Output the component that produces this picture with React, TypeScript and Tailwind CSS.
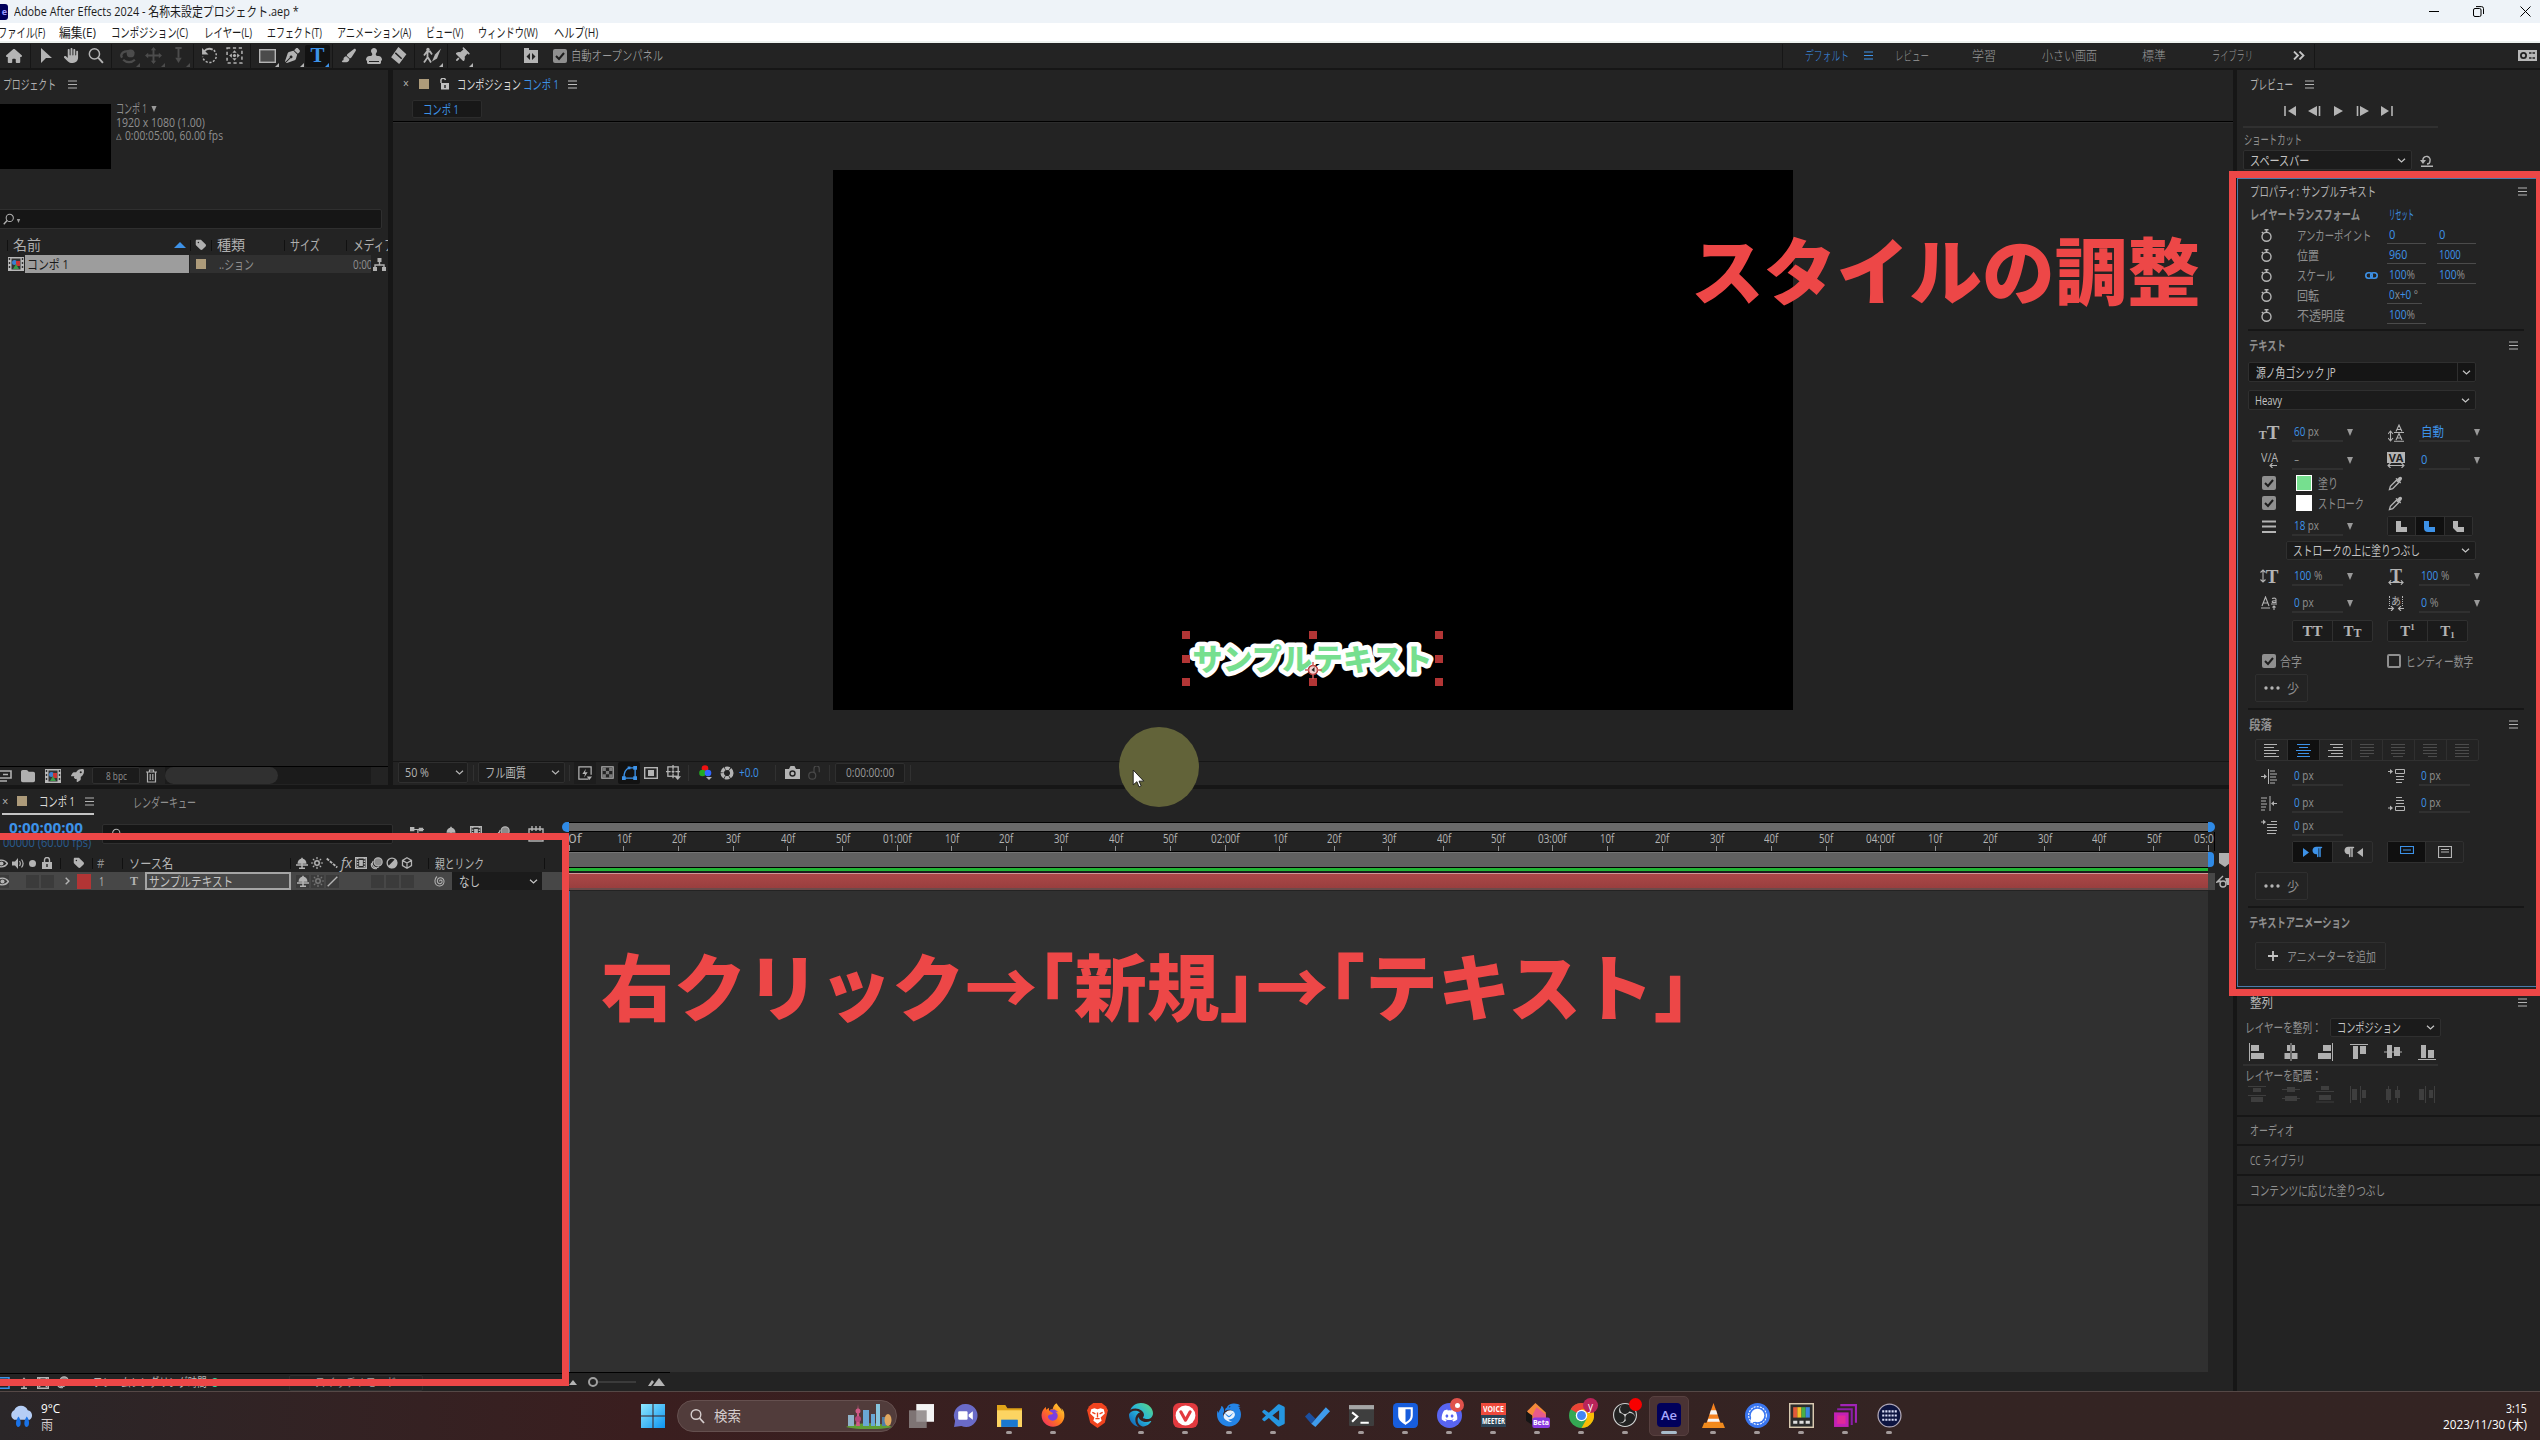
import React, { useLayoutEffect, useRef } from "react";
import { FaHand, FaStamp, FaThumbtack, FaPaintbrush, FaPenNib, FaHouse, FaFirefoxBrowser, FaEdge, FaDiscord, FaTag, FaFolder, FaRocket, FaParagraph } from "react-icons/fa6";
import { SiThunderbird, SiObsstudio } from "react-icons/si";
import { BiLogoVisualStudio } from "react-icons/bi";

/* Text squeezed or stretched to the width given by its class. */
function T({ c = "", children }: { c?: string; children: React.ReactNode }) {
  const o = useRef<HTMLSpanElement>(null);
  const i = useRef<HTMLSpanElement>(null);
  useLayoutEffect(() => {
    if (o.current && i.current) {
      const n = i.current.offsetWidth;
      if (n > 0) i.current.style.transform = `scaleX(${o.current.offsetWidth / n})`;
    }
  }, []);
  return (
    <span ref={o} className={`block shrink-0 whitespace-nowrap ${c}`}>
      <span ref={i} className="inline-block origin-left align-top">{children}</span>
    </span>
  );
}

function Svg({ c = "size-4", vb = "0 0 16 16", children }: { c?: string; vb?: string; children: React.ReactNode }) {
  return (
    <svg viewBox={vb} className={`shrink-0 ${c}`} fill="none" stroke="currentColor" strokeWidth="1.4">
      {children}
    </svg>
  );
}

const Menu = ({ c = "" }: { c?: string }) => (
  <Svg c={`h-[9px] w-[9px] ${c}`} vb="0 0 9 9"><path d="M0 1h9M0 4.500h9M0 8h9" strokeWidth="1" /></Svg>
);
const Chev = ({ c = "" }: { c?: string }) => (
  <Svg c={`h-[5px] w-[9px] ${c}`} vb="0 0 9 5"><path d="M1 .7l3.500 3.300L8 .7" strokeWidth="1.200" /></Svg>
);
const Tri = ({ c = "h-[7px] w-[6px]" }: { c?: string }) => (
  <Svg c={`text-[#9a9a9a] ${c}`} vb="0 0 6 7"><path d="M0 0h6L3 7z" fill="currentColor" stroke="none" /></Svg>
);
const Sep = ({ c = "" }: { c?: string }) => <span className={`h-[24px] w-px shrink-0 bg-[#161616] ${c}`} />;
const Slot = ({ w = "w-[25px]", c = "", children }: { w?: string; c?: string; children?: React.ReactNode }) => (
  <span className={`relative flex h-[22px] shrink-0 items-center justify-center ${w} ${c}`}>{children}</span>
);
const Corner = () => (
  <Svg c="absolute right-[1px] bottom-0 size-[4px]" vb="0 0 4 4"><path d="M4 0v4H0z" fill="currentColor" stroke="none" /></Svg>
);
const Check = ({ c = "" }: { c?: string }) => (
  <Svg c={`size-[14px] ${c}`} vb="0 0 14 14">
    <rect width="14" height="14" rx="2" fill="#8f8f8f" stroke="none" />
    <path d="M3 7l3 3 5-6" stroke="#1d1d1d" strokeWidth="2" />
  </Svg>
);
const Loupe = ({ c = "" }: { c?: string }) => (
  <Svg c={c}><circle cx="7" cy="6.500" r="4.800" /><path d="M10.500 10l4.500 5" strokeWidth="1.800" /></Svg>
);
const CompIcon = ({ c = "" }: { c?: string }) => (
  <Svg c={`h-[14px] w-[16px] ${c}`} vb="0 0 16 14">
    <rect width="16" height="14" fill="#b8b8b8" stroke="none" />
    <path d="M1.500 1v12M14.500 1v12" stroke="#333" strokeDasharray="2 2" />
    <rect x="3.500" y="1.500" width="9" height="11" fill="#333" stroke="none" />
    <circle cx="6.500" cy="5.500" r="2.500" fill="#3a7fd0" stroke="none" />
    <rect x="8" y="4" width="4" height="5" fill="#c33" stroke="none" />
    <path d="M5 12l3-5 3 5z" fill="#3a9b48" stroke="none" />
  </Svg>
);
const HS = ({ c }: { c: string }) => <span className={`h-[11px] w-px shrink-0 bg-[#111] ${c}`} />;

function MenuBar() {
  return (
    <>
      <div className="flex h-[23px] items-center bg-[#eef3f8] text-[13px] text-[#1b1b1b]">
        <span className="flex h-[16px] w-[8px] items-center justify-end overflow-hidden rounded-r-[3px] bg-[#00005b] pr-[1px] text-[9px] font-bold text-[#9999ff]">e</span>
        <T c="ml-[6px] w-[285px]">Adobe After Effects 2024 - 名称未設定プロジェクト.aep *</T>
        <div className="ml-auto flex items-center pr-[9px] text-black">
          <Svg c="h-[12px] w-[10px]" vb="0 0 10 12"><path d="M0 5.500h10" strokeWidth="1" /></Svg>
          <Svg c="ml-[34px] size-[11px]" vb="0 0 11 11"><rect x=".5" y="2.500" width="7.500" height="8" rx="1.500" strokeWidth="1" /><path d="M3 .6h5.500a2 2 0 012 2V8" strokeWidth="1" /></Svg>
          <Svg c="ml-[36px] size-[11px]" vb="0 0 11 11"><path d="M.5.5l10 10M10.500.5l-10 10" strokeWidth="1" /></Svg>
        </div>
      </div>
      <div className="flex h-[20px] items-center border-b-2 border-[#edf2ef] bg-white text-[13px] text-[#1b1b1b]">
        <T c="-ml-[2px] w-[47px]">ファイル(F)</T>
        <T c="ml-[14px] w-[37px]">編集(E)</T>
        <T c="ml-[15px] w-[77px]">コンポジション(C)</T>
        <T c="ml-[16px] w-[48px]">レイヤー(L)</T>
        <T c="ml-[15px] w-[55px]">エフェクト(T)</T>
        <T c="ml-[15px] w-[74px]">アニメーション(A)</T>
        <T c="ml-[15px] w-[37px]">ビュー(V)</T>
        <T c="ml-[15px] w-[60px]">ウィンドウ(W)</T>
        <T c="ml-[16px] w-[44px]">ヘルプ(H)</T>
      </div>
    </>
  );
}

function Toolbar() {
  return (
    <div className="flex h-[25px] items-center bg-[#232323] text-[13px] text-[#b4b4b4]">
      <Slot w="w-[28px]"><FaHouse className="size-[16px]" /></Slot>
      <Sep c="ml-[2px]" />
      <Slot c="ml-[3px]"><Svg c="h-[16px] w-[13px]" vb="0 0 13 16"><path d="M1 0l11 10H6l-5 5z" fill="currentColor" stroke="none" /></Svg></Slot>
      <Slot w="w-[24px]"><FaHand className="size-[15px]" /></Slot>
      <Slot><Loupe c="size-[17px]" /></Slot>
      <Sep c="ml-[3px]" />
      <div className="ml-[4px] flex text-[#4c4c4c]">
        <Slot><Svg c="size-[17px]"><path d="M2 10a6 4 0 1111-4" strokeWidth="2.200" /><circle cx="10" cy="6" r="3" fill="currentColor" /><path d="M3 12c3 3 8 3 11 0" strokeWidth="2" /></Svg><Corner /></Slot>
        <Slot><Svg c="size-[17px]"><path d="M8 2v12M2 8h12" strokeWidth="1.800" /><path d="M8 0l2.500 3h-5zM8 16l2.500-3h-5zM0 8l3-2.500v5zM16 8l-3-2.500v5z" fill="currentColor" stroke="none" /></Svg><Corner /></Slot>
        <Slot><Svg c="size-[17px]"><path d="M8 1v9M5 1h6" strokeWidth="1.800" /><path d="M8 15l3-5H5z" fill="currentColor" stroke="none" /></Svg><Corner /></Slot>
      </div>
      <Sep c="ml-[2px]" />
      <Slot c="ml-[3px]"><Svg c="size-[17px]"><path d="M3 4a6.500 6.500 0 018-1.500" strokeWidth="1.800" /><path d="M12 3a6.500 6.500 0 11-10.500 6" strokeDasharray="2 1.500" /><path d="M1 1v6h6z" fill="currentColor" stroke="none" /></Svg></Slot>
      <Slot><Svg c="size-[17px]"><rect x="1" y="1" width="14" height="14" strokeDasharray="3 2.500" /><path d="M8 3l2 2.500H6zM8 13l2-2.500H6zM3 8l2.500-2v4zM13 8l-2.500-2v4z" fill="currentColor" stroke="none" /><circle cx="8" cy="8" r="1.500" fill="currentColor" stroke="none" /></Svg></Slot>
      <Sep c="ml-[3px]" />
      <Slot c="ml-[4px]"><Svg c="h-[14px] w-[17px]" vb="0 0 17 14"><rect x=".7" y=".7" width="15.600" height="12.600" fill="#4b4b4b" /></Svg><Corner /></Slot>
      <Slot><FaPenNib className="size-[15px]" /><Corner /></Slot>
      <Slot c="rounded-[2px] bg-[#121212] font-['Liberation_Serif',serif] text-[21px] leading-none font-bold text-[#3d92e8]">T<Corner /></Slot>
      <Sep c="ml-[2px]" />
      <Slot c="ml-[3px]"><FaPaintbrush className="size-[15px]" /></Slot>
      <Slot><FaStamp className="size-[16px]" /></Slot>
      <Slot><Svg c="size-[17px]"><path d="M8 1l6.500 6-6 8L2 9.500z" fill="currentColor" /><path d="M5 5.500l6 5.500" stroke="#232323" /></Svg></Slot>
      <Sep c="ml-[3px]" />
      <Slot c="ml-[4px]"><Svg c="h-[17px] w-[20px]" vb="0 0 20 16"><circle cx="6" cy="2" r="1.700" fill="currentColor" stroke="none" /><path d="M2 8l3-4h3l2 3M5.500 5v5L2 15M6 10l3 5" strokeWidth="1.800" /><path d="M19 1l-6 6-3 7 5-3z" fill="currentColor" stroke="none" /></Svg><Corner /></Slot>
      <Sep c="ml-[3px]" />
      <Slot c="ml-px"><FaThumbtack className="size-[15px] rotate-45" /><Corner /></Slot>
      <Sep c="ml-[26px]" />
      <Slot c="ml-[17px]"><Svg c="h-[15px] w-[14px]" vb="0 0 14 15"><path d="M0 0h5v2h9v13H0z" fill="currentColor" stroke="none" /><path d="M6 5L2.500 8.500 6 12zM8 5l3.500 3.500L8 12z" fill="#222" stroke="none" /></Svg></Slot>
      <Check c="ml-[10px]" />
      <T c="ml-[4px] w-[92px] font-light">自動オープンパネル</T>
      <div className="ml-auto flex w-[758px] items-center font-light text-[#9a9a9a]">
        <Sep />
        <T c="ml-[22px] w-[44px] text-[#3d92e8]">デフォルト</T>
        <Menu c="ml-[15px] text-[#3d92e8]" />
        <T c="ml-[22px] w-[34px]">レビュー</T>
        <T c="ml-[43px] w-[24px]">学習</T>
        <T c="ml-[46px] w-[55px]">小さい画面</T>
        <T c="ml-[45px] w-[24px]">標準</T>
        <T c="ml-[46px] w-[41px]">ライブラリ</T>
        <Svg c="ml-[40px] h-[9px] w-[12px] text-[#c4c4c4]" vb="0 0 12 9"><path d="M1 .5l4 4-4 4M6.500.5l4 4-4 4" strokeWidth="1.800" /></Svg>
        <Sep c="ml-[9px]" />
        <Svg c="mr-[3px] ml-auto h-[11px] w-[19px] text-[#b8b8b8]" vb="0 0 19 11"><rect width="19" height="11" fill="currentColor" stroke="none" /><circle cx="5.500" cy="5.500" r="2.600" stroke="#222" strokeWidth="1.800" /><path d="M11 3h6M11 8h6" stroke="#222" strokeWidth="1.500" strokeDasharray="2.500 1" /></Svg>
      </div>
    </div>
  );
}

function ProjectPanel() {
  return (
    <section className="flex w-[388px] shrink-0 flex-col overflow-hidden bg-[#232323] text-[#b0b0b0]">
      <div className="flex h-[34px] items-center pb-[6px]">
        <T c="ml-[3px] w-[53px]">プロジェクト</T>
        <Menu c="ml-[12px]" />
      </div>
      <div className="flex h-[105px]">
        <div className="h-[65px] w-[111px] bg-black" />
        <div className="-mt-[3px] ml-[5px] flex flex-col text-[#8f8f8f]">
          <div className="flex h-[15px] items-center"><T c="w-[31px]">コンポ 1</T><Tri c="ml-[4px] h-[6px] w-[6px]" /></div>
          <T c="h-[13px] w-[89px]">1920 x 1080 (1.00)</T>
          <div className="flex"><T c="w-[6px]">▵</T><T c="ml-[3px] w-[98px]">0:00:05:00, 60.00 fps</T></div>
        </div>
      </div>
      <div className="-ml-[3px] flex h-[20px] w-[385px] items-center rounded-[2px] border border-[#2f2f2f] bg-[#161616] pl-[5px]">
        <Loupe c="size-[12px] -scale-x-100" /><Tri c="mt-[3px] ml-[1px] h-[4px] w-[5px]" />
      </div>
      <div className="mt-[6px] flex h-[20px] items-center text-[14px]">
        <HS c="ml-[7px]" />
        <T c="ml-[5px] w-[28px]">名前</T>
        <Svg c="ml-[133px] h-[6px] w-[12px] text-[#3d92e8]" vb="0 0 12 6"><path d="M0 6l6-6 6 6z" fill="currentColor" stroke="none" /></Svg>
        <HS c="ml-[4px]" />
        <FaTag className="ml-[4px] size-[12px] shrink-0" />
        <HS c="ml-[4px]" />
        <T c="ml-[5px] w-[28px]">種類</T>
        <HS c="ml-[39px]" />
        <T c="ml-[5px] w-[30px]">サイズ</T>
        <HS c="ml-[26px]" />
        <T c="ml-[6px] w-[42px]">メディア</T>
      </div>
      <div className="flex h-[18px] items-center">
        <CompIcon c="ml-[8px]" />
        <div className="ml-[1px] flex h-full w-[164px] shrink-0 items-center bg-[#9d9d9d] pl-[2px] text-[#1a1a1a]"><T c="w-[42px]">コンポ 1</T></div>
        <div className="ml-px flex h-full w-[181px] shrink-0 items-center overflow-hidden bg-[#303030] text-[#8f8f8f]">
          <span className="ml-[6px] size-[10px] shrink-0 bg-[#ad9b7a]" />
          <T c="ml-[13px] w-[35px]">..ション</T>
          <T c="ml-[99px] w-[22px]">0:00:</T>
        </div>
        <Svg c="ml-[2px] h-[13px] w-[13px]" vb="0 0 13 13"><path d="M4.500 0h4v4h-4zM0 9h4v4H0zM9 9h4v4H9z" fill="currentColor" stroke="none" /><path d="M6.500 4v3M2 9V7h9v2" /></Svg>
      </div>
      <div className="mt-auto flex h-[19px] items-center border-t border-black pb-px">
        <Svg c="h-[12px] w-[12px]" vb="0 0 12 12"><path d="M0 1h11v7H0M3 4.500h5M0 11h7" strokeWidth="1.600" /></Svg>
        <FaFolder className="ml-[9px] size-[14px] shrink-0" />
        <CompIcon c="ml-[10px]" />
        <FaRocket className="ml-[10px] size-[13px] shrink-0" />
        <div className="ml-[8px] flex h-[17px] w-[48px] items-center justify-center rounded-[2px] border border-[#2f2f2f] bg-[#1b1b1b] text-[11px] text-[#8f8f8f]"><T c="w-[21px]">8 bpc</T></div>
        <Svg c="ml-[6px] h-[14px] w-[11px]" vb="0 0 11 14"><path d="M0 3h11M3.500 3V1h4v2M1.500 3v10h8V3M4.200 5v6M6.800 5v6" strokeWidth="1.200" /></Svg>
        <div className="ml-[8px] h-full w-[206px] bg-[#1b1b1b]"><div className="h-[17px] w-[113px] rounded-full bg-[#303030]" /></div>
      </div>
    </section>
  );
}

const Vsep = ({ c = "" }: { c?: string }) => <span className={`h-[16px] w-px shrink-0 bg-[#313131] ${c}`} />;

function CompPanel() {
  return (
    <section className="ml-[5px] flex w-[1840px] shrink-0 flex-col bg-[#232323] text-[#c0c0c0]">
      <div className="flex h-[30px] items-center pb-[2px]">
        <T c="ml-[10px] w-[6px] text-[12px]">×</T>
        <span className="ml-[10px] h-[10px] w-[10px] bg-[#ad9b7a]" />
        <Svg c="ml-[11px] h-[12px] w-[9px]" vb="0 0 9 12"><path d="M1 5V3a2.200 2.200 0 014.500-1" /><rect x="1" y="5" width="8" height="6.500" fill="currentColor" stroke="none" /><path d="M5 7v3" stroke="#222" /></Svg>
        <T c="ml-[8px] w-[64px] text-[#dcdcdc]">コンポジション</T>
        <T c="ml-[2px] w-[36px] text-[#3d92e8]">コンポ 1</T>
        <Menu c="ml-[9px]" />
      </div>
      <div className="flex h-[21px] items-start">
        <div className="ml-[19px] flex h-[18px] w-[70px] items-center rounded-[2px] border border-[#2c2c2c] bg-[#181818] pl-[10px] text-[#3d92e8]"><T c="w-[36px]">コンポ 1</T></div>
      </div>
      <div className="h-[2px] border-b border-[#2c2c2c] bg-black" />
      <div className="mt-[47px] ml-[440px] grid h-[540px] w-[960px] justify-center bg-black pt-[456px] pr-[1px]">
        <svg className="h-[64px] w-[270px]" viewBox="0 0 270 64">
          <text x="134.500" y="43.500" textAnchor="middle" textLength="240" className="fill-[#76df8f] stroke-white font-['Noto_Sans_CJK_JP',sans-serif] text-[30px] font-black [paint-order:stroke]" strokeWidth="9" strokeLinejoin="round">サンプルテキスト</text>
          <g fill="#b23535">
            <path d="M4 5h8v8H4zM131 5h8v8h-8zM257 5h8v8h-8zM4 29h8v8H4zM257 29h8v8h-8zM4 52h8v8H4zM131 52h8v8h-8zM257 52h8v8h-8z" />
          </g>
          <g fill="none"><circle cx="135" cy="44" r="4.500" fill="#f5d0d0" stroke="#b23535" strokeWidth="1.500" /><path d="M127 44h4M139 44h5M135 36v4M135 48v5" stroke="#d06060" strokeWidth="1.500" /><path d="M136.500 41v5l-3-2z" fill="#222" /></g>
        </svg>
      </div>
      <div className="mt-auto flex h-[24px] items-center border-t border-[#161616] pb-[2px] text-[#b4b4b4]">
        <div className="ml-[5px] flex h-[21px] w-[70px] items-center rounded-[2px] border border-[#2f2f2f] bg-[#1d1d1d] pl-[6px]"><T c="w-[24px]">50 %</T><Chev c="mr-[3px] ml-auto" /></div>
        <Vsep c="ml-[5px]" />
        <div className="ml-[4px] flex h-[21px] w-[87px] items-center rounded-[2px] border border-[#2f2f2f] bg-[#1d1d1d] pl-[6px]"><T c="w-[41px]">フル画質</T><Chev c="mr-[4px] ml-auto" /></div>
        <Vsep c="ml-[4px]" />
        <Slot w="w-[22px]" c="ml-[4px] bg-[#1d1d1d]"><Svg c="size-[14px]"><path d="M12 15H1V1h14v9" /><path d="M9 3L5 9h3l-1 4 4-6H8z" fill="currentColor" stroke="none" /><path d="M10 12h6l-3 4z" fill="currentColor" stroke="none" /></Svg></Slot>
        <Slot w="w-[22px]"><Svg c="size-[13px]"><rect x="1" y="1" width="14" height="14" /><path d="M2 2h4v4H2zM10 2h4v4h-4zM6 6h4v4H6zM2 10h4v4H2zM10 10h4v4h-4z" fill="currentColor" stroke="none" opacity=".6" /></Svg></Slot>
        <Slot w="w-[22px]" c="rounded-[2px] bg-[#121212] text-[#3d92e8]"><Svg c="size-[15px]"><path d="M2 14C2 8 4 4 8 3h6v11z" /><path d="M0 12h4v4H0zM12 12h4v4h-4zM12 1h4v4h-4zM6 1.500h3v3H6z" fill="currentColor" stroke="none" /></Svg></Slot>
        <Slot w="w-[22px]"><Svg c="h-[12px] w-[14px]" vb="0 0 14 12"><rect x=".7" y=".7" width="12.600" height="10.600" /><rect x="4" y="3" width="6" height="6" fill="currentColor" stroke="none" /></Svg></Slot>
        <Slot w="w-[22px]"><Svg c="size-[15px]"><rect x="2" y="2" width="11" height="10" /><path d="M7.500 0v5M7.500 9v5M0 7h5M10 7h5M6 7h3M7.500 5.500v3" /><path d="M9 12h7l-3.500 4z" fill="currentColor" stroke="none" /></Svg></Slot>
        <Vsep c="ml-[4px]" />
        <Slot w="w-[24px]" c="ml-[4px]"><Svg c="h-[15px] w-[13px]" vb="0 0 13 15"><g stroke="none"><circle cx="6" cy="3.500" r="3.300" fill="#e11" /><circle cx="3.500" cy="8" r="3.300" fill="#2a2" /><circle cx="9" cy="8" r="3.300" fill="#36f" /><path d="M7 12h6l-3 3z" fill="currentColor" /></g></Svg></Slot>
        <Slot w="w-[20px]"><Svg c="size-[14px]"><circle cx="8" cy="8" r="5.500" strokeWidth="4" strokeDasharray="5 .8" /></Svg></Slot>
        <T c="ml-[2px] w-[20px] text-[#3d92e8]">+0.0</T>
        <Vsep c="ml-[16px]" />
        <Slot w="w-[24px]" c="ml-[4px]"><Svg c="h-[13px] w-[15px]" vb="0 0 15 13"><path d="M0 3h4l1.500-3h4L11 3h4v10H0z" fill="currentColor" stroke="none" /><circle cx="7.500" cy="7.500" r="2.500" stroke="#222" /></Svg></Slot>
        <Slot w="w-[20px]" c="text-[#484848]"><Svg c="size-[14px]"><circle cx="6" cy="11" r="4" /><path d="M8 8V3a3 3 0 016 0v4" /></Svg></Slot>
        <Vsep c="ml-[5px]" />
        <div className="ml-[5px] flex h-[20px] w-[70px] items-center justify-center rounded-[2px] border border-[#2f2f2f] bg-[#1d1d1d] text-[#9a9a9a]"><T c="w-[48px]">0:00:00:00</T></div>
        <Vsep c="ml-[5px]" />
      </div>
    </section>
  );
}

/* ---- right column ---- */
const BoxSel = ({ c, w, children }: { c: string; w: string; children: React.ReactNode }) => (
  <div className={`flex shrink-0 items-center rounded-[2px] border border-[#2f2f2f] bg-[#1b1b1b] pl-[6px] text-[#c4c4c4] ${c}`}><T c={w}>{children}</T><Chev c="mr-[5px] ml-auto" /></div>
);
const Watch = () => (
  <Svg c="ml-[23px] size-[13px] text-[#b4b4b4]" vb="0 0 13 13"><circle cx="6.500" cy="7.700" r="4.500" /><path d="M6.500 3V1M4.500.8h4M1.800 3l1.500 1.300" strokeWidth="1.500" /></Svg>
);
const Val = ({ w, tw, children }: { w: string; tw: string; children: React.ReactNode }) => (
  <span className={`flex h-[17px] shrink-0 items-center border-b border-[#4b4b4b] pl-[2px] text-[#3d92e8] ${w}`}><T c={tw}>{children}</T></span>
);
const U = ({ children }: { children: React.ReactNode }) => <span className="text-[#8f8f8f]">{children}</span>;

function Prop({ label, lw, link, children }: { label: string; lw: string; link?: boolean; children: React.ReactNode }) {
  return (
    <div className="flex h-[20px] items-center">
      <Watch />
      <div className="ml-[24px] flex w-[90px] shrink-0 items-center">
        <T c={`${lw} text-[#8f8f8f]`}>{label}</T>
        {link && <Svg c="mr-[9px] ml-auto h-[7px] w-[13px] text-[#3d92e8]" vb="0 0 13 7"><rect x=".8" y=".8" width="6.500" height="5.400" rx="2.700" strokeWidth="1.600" /><rect x="5.700" y=".8" width="6.500" height="5.400" rx="2.700" strokeWidth="1.600" /></Svg>}
      </div>
      <div className="flex gap-[11px]">{children}</div>
    </div>
  );
}
/* One half of a two-column character row: icon, value, optional drop arrow. */
const Field = ({ icon, tw, tri = true, children }: { icon: React.ReactNode; tw: string; tri?: boolean; children: React.ReactNode }) => (
  <div className="flex w-[127px] shrink-0 items-center">
    <span className="flex w-[20px] justify-center text-[#b4b4b4]">{icon}</span>
    <span className="ml-[13px] flex h-[19px] w-[51px] items-center border-b-2 border-[#303030] pl-[2px] text-[#3d92e8]"><T c={tw}>{children}</T></span>
    {tri && <Tri c="ml-[4px] h-[7px] w-[6px]" />}
  </div>
);
const Two = ({ c, children }: { c: string; children: React.ReactNode }) => <div className={`flex items-center pl-[22px] ${c}`}>{children}</div>;
const serif = "font-['Liberation_Serif',serif] font-bold leading-none";
const Seg = ({ c, children }: { c: string; children: React.ReactNode }) => (
  <div className={`flex divide-x divide-[#303030] rounded-[2px] border border-[#303030] text-[#b4b4b4] [&>span]:flex [&>span]:flex-1 [&>span]:items-center [&>span]:justify-center ${c}`}>{children}</div>
);
const Rule = ({ c }: { c: string }) => <div className={`h-[2px] bg-[#161616] ${c}`} />;
const Dropper = () => (
  <Svg c="size-[15px] text-[#b4b4b4]"><path d="M1.500 14.500l1-3.500L9 4.500 11.500 7 5 13.500z" /><path d="M8 3l5 5 1-1-1-1.500c2-1.500 2.500-3 1.500-4.200s-3-.5-4.200 1.500L9 2z" fill="currentColor" stroke="none" /></Svg>
);
const Para = ({ d }: { d: string }) => <Svg c="h-[13px] w-[15px]" vb="0 0 15 13"><path d={d} strokeWidth="1" /></Svg>;
const More = () => (
  <div className="ml-[18px] flex h-[28px] w-[53px] items-center rounded-[2px] border border-[#2f2f2f] text-[#8f8f8f]">
    <Svg c="ml-[8px] h-[4px] w-[16px] text-[#b4b4b4]" vb="0 0 16 4"><path d="M.3 2a1.700 1.700 0 003.400 0 1.700 1.700 0 00-3.400 0zM6.300 2a1.700 1.700 0 003.400 0 1.700 1.700 0 00-3.400 0zM12.300 2a1.700 1.700 0 003.400 0 1.700 1.700 0 00-3.400 0z" fill="currentColor" stroke="none" /></Svg>
    <T c="ml-[7px] w-[12px]">少</T>
  </div>
);

function RightColumn() {
  return (
    <aside className="ml-auto flex h-[1321px] w-[303px] shrink-0 flex-col bg-[#232323] text-[#b4b4b4]">
      <div className="flex h-[30px] items-center pb-[2px] pl-[13px]"><T c="w-[43px]">プレビュー</T><Menu c="ml-[12px]" /></div>
      <div className="flex h-[22px] items-center gap-[11px] pl-[47px]">
        <Svg c="h-[10px] w-[13px]" vb="0 0 13 10"><path d="M1 0v10" strokeWidth="1.600" /><path d="M12 0v10L4 5z" fill="currentColor" stroke="none" /></Svg>
        <Svg c="h-[10px] w-[13px]" vb="0 0 13 10"><path d="M11.500 0v10" strokeWidth="1.600" /><path d="M9 0v10L0 5z" fill="currentColor" stroke="none" /></Svg>
        <Svg c="h-[10px] w-[13px]" vb="0 0 13 10"><path d="M2 0v10l9-5z" fill="currentColor" stroke="none" /></Svg>
        <Svg c="h-[10px] w-[13px]" vb="0 0 13 10"><path d="M1.500 0v10" strokeWidth="1.600" /><path d="M4 0v10l9-5z" fill="currentColor" stroke="none" /></Svg>
        <Svg c="h-[10px] w-[13px]" vb="0 0 13 10"><path d="M12 0v10" strokeWidth="1.600" /><path d="M1 0v10l8-5z" fill="currentColor" stroke="none" /></Svg>
      </div>
      <div className="mt-[4px] ml-[6px] h-[2px] w-[195px] bg-[#303030]" />
      <div className="flex h-[22px] items-center pl-[7px] text-[#8f8f8f]"><T c="w-[58px]">ショートカット</T></div>
      <div className="flex h-[20px] items-center pl-[6px]"><BoxSel c="h-[20px] w-[169px]" w="w-[59px]">スペースバー</BoxSel>
        <Svg c="ml-[8px] size-[13px]" vb="0 0 13 13"><path d="M3 8V5a3.500 3.500 0 117 2c0 2-1 3-3 3M1 12.300h12" /><path d="M0 6h6l-3 4z" fill="currentColor" stroke="none" /></Svg>
      </div>

      <div className="mt-[8px] flex h-[809px] flex-col border border-[#4a7bab] pt-[1px]">
        <div className="-ml-px flex h-[22px] items-center pl-[13px]"><T c="w-[126px]">プロパティ: サンプルテキスト</T><Menu c="mr-[12px] ml-auto" /></div>
        <div className="-ml-px flex h-[22px] items-center pt-[3px] pl-[13px] text-[#8f8f8f]"><T c="w-[110px] font-bold">レイヤートランスフォーム</T><T c="ml-[29px] w-[25px] text-[#3d92e8]">リセット</T></div>
        <div className="-ml-px pt-[1px]">
          <Prop label="アンカーポイント" lw="w-[74px]"><Val w="w-[39px]" tw="w-[6px]">0</Val><Val w="w-[39px]" tw="w-[6px]">0</Val></Prop>
          <Prop label="位置" lw="w-[22px]"><Val w="w-[39px]" tw="w-[18px]">960</Val><Val w="w-[39px]" tw="w-[22px]">1000</Val></Prop>
          <Prop label="スケール" lw="w-[38px]" link><Val w="w-[39px]" tw="w-[26px]">100<U>%</U></Val><Val w="w-[39px]" tw="w-[26px]">100<U>%</U></Val></Prop>
          <Prop label="回転" lw="w-[22px]"><Val w="w-[35px]" tw="w-[29px]">0<U>x</U>+0 <U>°</U></Val></Prop>
          <Prop label="不透明度" lw="w-[48px]"><Val w="w-[39px]" tw="w-[26px]">100<U>%</U></Val></Prop>
        </div>
        <Rule c="mt-[4px] ml-[10px] w-[276px]" />
        <div className="-ml-px flex h-[29px] items-center pl-[12px] font-bold text-[#8f8f8f]"><T c="w-[37px]">テキスト</T><Menu c="mr-[21px] ml-auto text-[#b4b4b4]" /></div>
        <div className="-ml-px flex flex-col gap-[8px] pt-[2px] pl-[11px]">
          <div className="flex h-[20px] w-[228px] items-center rounded-[2px] border border-[#2f2f2f] bg-[#151515] pl-[7px] text-[#c4c4c4]">
            <T c="w-[80px]">源ノ角ゴシック JP</T><span className="ml-auto h-full w-px bg-[#2f2f2f]" /><Chev c="mx-[4px]" />
          </div>
          <BoxSel c="h-[20px] w-[228px]" w="w-[27px]">Heavy</BoxSel>
        </div>
        <div className="-ml-px">
          <Two c="mt-[12px] h-[21px]">
            <Field tw="w-[25px]" icon={<span className={`${serif} text-[19px]`}><span className="text-[12px]">T</span>T</span>}>60 <U>px</U></Field>
            <Field tw="w-[23px]" icon={<Svg c="h-[18px] w-[17px]" vb="0 0 17 18"><path d="M2.500 8v8M0 10l2.500-3L5 10M0 14l2.500 3L5 14M6 17.300h10M6 8.500h10M8 7.500L11 1l3 6.500M9 5.500h4M8 16l3-6.500 3 6.500M9 14h4" strokeWidth="1.100" /></Svg>}>自動</Field>
          </Two>
          <Two c="mt-[7px] h-[20px]">
            <Field tw="w-[5px]" icon={<span className="flex flex-col items-center text-[12px] leading-[11px]"><T c="w-[17px]">V/A</T><Svg c="ml-[7px] h-[5px] w-[8px]" vb="0 0 8 5"><path d="M1 2.500h7M3.500 0L1 2.500 3.500 5" strokeWidth="1.100" /></Svg></span>}><U>-</U></Field>
            <Field tw="w-[6px]" icon={<span className="flex flex-col items-center"><span className="h-[11px] w-[18px] bg-[#b4b4b4] text-center text-[11px] leading-[11px] font-bold text-[#222]">VA</span><Svg c="h-[5px] w-[18px]" vb="0 0 18 5"><path d="M1 2.500h16M3.500 0L1 2.500 3.500 5M14.500 0L17 2.500 14.500 5" strokeWidth="1.100" /></Svg></span>}>0</Field>
          </Two>
          <div className="mt-[3px] flex h-[20px] items-center pl-[25px] text-[#8f8f8f]"><Check /><span className="ml-[20px] size-[16px] border border-white bg-[#76df8f]" /><span className="ml-[6px] flex w-[70px]"><T c="w-[20px]">塗り</T></span><Dropper /></div>
          <div className="flex h-[20px] items-center pl-[25px] text-[#8f8f8f]"><Check /><span className="ml-[20px] size-[16px] bg-white" /><span className="ml-[6px] flex w-[70px]"><T c="w-[46px]">ストローク</T></span><Dropper /></div>
          <Two c="mt-[2px] h-[22px]">
            <Field tw="w-[25px]" icon={<Svg c="h-[13px] w-[14px]" vb="0 0 14 13"><path d="M0 1.500h14M0 6.500h14M0 12h14" strokeWidth="1.800" /></Svg>}>18 <U>px</U></Field>
            <Seg c="ml-[1px] h-[20px] w-[86px]">
              <span className="bg-[#1b1b1b]"><Svg c="size-[11px]" vb="0 0 11 11"><path d="M0 0h5v6h6v5H0z" fill="currentColor" stroke="none" /></Svg></span>
              <span className="bg-[#101010] text-[#3d92e8]"><Svg c="size-[11px]" vb="0 0 11 11"><path d="M0 0h5v6h6v5H4a4 4 0 01-4-4z" fill="currentColor" stroke="none" /></Svg></span>
              <span className="bg-[#1b1b1b]"><Svg c="size-[11px]" vb="0 0 11 11"><path d="M0 0h5v6h6v5H4L0 7z" fill="currentColor" stroke="none" /></Svg></span>
            </Seg>
          </Two>
          <div className="mt-[4px] pl-[49px]"><BoxSel c="h-[19px] w-[190px]" w="w-[127px]">ストロークの上に塗りつぶし</BoxSel></div>
          <Two c="mt-[6px] h-[20px]">
            <Field tw="w-[28px]" icon={<span className="flex items-center"><Svg c="h-[14px] w-[6px]" vb="0 0 6 14"><path d="M3 1v12M.5 3.500L3 1l2.500 2.500M.5 10.500L3 13l2.500-2.500" strokeWidth="1.100" /></Svg><span className={`${serif} text-[19px]`}>T</span></span>}>100 <U>%</U></Field>
            <Field tw="w-[28px]" icon={<span className="flex flex-col items-center"><span className={`${serif} h-[13px] text-[18px]`}>T</span><Svg c="h-[5px] w-[16px]" vb="0 0 18 5"><path d="M1 2.500h16M3.500 0L1 2.500 3.500 5M14.500 0L17 2.500 14.500 5" strokeWidth="1.200" /></Svg></span>}>100 <U>%</U></Field>
          </Two>
          <Two c="mt-[6px] h-[22px]">
            <Field tw="w-[20px]" icon={<Svg c="h-[15px] w-[16px]" vb="0 0 16 15"><path d="M1 10l3.500-9L8 10M2.300 7h4.500M0 12h9M10 8h6M13 14v-4M11.500 11.500L13 10l1.500 1.500M11 2.500c3-1 4 0 4 1v3h-3.500c-1-1.500 1-2 3.500-1.500" strokeWidth="1.100" /></Svg>}>0 <U>px</U></Field>
            <Field tw="w-[18px]" icon={<span className="flex flex-col items-center text-[10px] leading-[10px]"><span className="border-x border-dotted px-px">あ</span><Svg c="h-[5px] w-[16px]" vb="0 0 16 5"><path d="M0 2.500h5M3 0l2.500 2.500L3 5M16 2.500h-5M13 0l-2.500 2.500L13 5" strokeWidth="1.100" /></Svg></span>}>0 <U>%</U></Field>
          </Two>
          <div className={`mt-[6px] flex pl-[55px] ${serif} text-[15px]`}>
            <Seg c="h-[22px] w-[81px] bg-[#1b1b1b]"><span>TT</span><span>T<b className="pt-[3px] text-[12px]">T</b></span></Seg>
            <Seg c="ml-[14px] h-[22px] w-[81px] bg-[#1b1b1b]"><span>T<b className="mb-[7px] text-[9px]">1</b></span><span>T<b className="mt-[8px] text-[9px]">1</b></span></Seg>
          </div>
          <div className="mt-[9px] flex h-[20px] items-center pl-[25px] text-[#8f8f8f]"><Check /><span className="ml-[4px] flex w-[107px]"><T c="w-[22px]">合字</T></span><span className="size-[14px] rounded-[2px] border-2 border-[#8f8f8f]" /><T c="ml-[5px] w-[67px]">ヒンディー数字</T></div>
          <div className="mt-[3px]"><More /></div>
        </div>
        <Rule c="mt-[6px] ml-[10px] w-[276px]" />
        <div className="-ml-px flex h-[28px] items-center pl-[12px] font-bold text-[#8f8f8f]"><T c="w-[23px]">段落</T><Menu c="mr-[21px] ml-auto text-[#b4b4b4]" /></div>
        <div className="-ml-px pt-[1px]">
          <Seg c="ml-[18px] h-[22px] w-[224px]">
            <span><Para d="M0 .5h13M0 3.500h10M0 6.500h15M0 9.500h12M0 12.500h15" /></span>
            <span className="bg-[#101010] text-[#3d92e8]"><Para d="M1 .5h13M3 3.500h9M0 6.500h15M2 9.500h11M1 12.500h13" /></span>
            <span><Para d="M2 .5h13M5 3.500h10M0 6.500h15M3 9.500h12M0 12.500h15" /></span>
            <span className="text-[#4c4c4c]"><Para d="M0 .5h14M0 3.500h14M0 6.500h14M0 9.500h14M0 12.500h9" /></span>
            <span className="text-[#4c4c4c]"><Para d="M0 .5h14M0 3.500h14M0 6.500h14M0 9.500h14M2 12.500h10" /></span>
            <span className="text-[#4c4c4c]"><Para d="M0 .5h14M0 3.500h14M0 6.500h14M0 9.500h14M5 12.500h9" /></span>
            <span className="text-[#4c4c4c]"><Para d="M0 .5h14M0 3.500h14M0 6.500h14M0 9.500h14M0 12.500h14" /></span>
          </Seg>
          <Two c="mt-[5px] h-[20px]">
            <Field tri={false} tw="w-[20px]" icon={<Svg c="h-[15px] w-[16px]" vb="0 0 16 15"><path d="M0 7.500h4M7.500 0v15M9 2h5M9 5h7M9 8h6M9 11h7M9 14h5" strokeWidth="1" /><path d="M3 5l3 2.500L3 10z" fill="currentColor" stroke="none" /></Svg>}>0 <U>px</U></Field>
            <Field tri={false} tw="w-[20px]" icon={<Svg c="h-[15px] w-[17px]" vb="0 0 17 15"><path d="M0 2.500h3M7.500.5h9v4h-9zM8 7.500h8M8 10.500h8M8 13.500h6" strokeWidth="1" /><path d="M2 0l3 2.500L2 5z" fill="currentColor" stroke="none" /></Svg>}>0 <U>px</U></Field>
          </Two>
          <Two c="mt-[7px] h-[20px]">
            <Field tri={false} tw="w-[20px]" icon={<Svg c="h-[15px] w-[16px]" vb="0 0 16 15"><path d="M12 7.500h4M9 0v15M0 2h6M0 5h5M0 8h6M0 11h5M0 14h4" strokeWidth="1" /><path d="M13 5l-3 2.500 3 2.500z" fill="currentColor" stroke="none" /></Svg>}>0 <U>px</U></Field>
            <Field tri={false} tw="w-[20px]" icon={<Svg c="h-[15px] w-[17px]" vb="0 0 17 15"><path d="M0 12h3M7.500 10.500h9v4h-9zM8 1.500h6M8 4.500h8M8 7.500h8" strokeWidth="1" /><path d="M2 9.500l3 2.500-3 2.500z" fill="currentColor" stroke="none" /></Svg>}>0 <U>px</U></Field>
          </Two>
          <Two c="mt-[3px] h-[20px]">
            <Field tri={false} tw="w-[20px]" icon={<Svg c="h-[15px] w-[16px]" vb="0 0 16 15"><path d="M0 3h3M10 2.500h6M6 5.500h10M6 8.500h10M6 11.500h10M6 14.500h9" strokeWidth="1" /><path d="M2 .5L5 3 2 5.500z" fill="currentColor" stroke="none" /></Svg>}>0 <U>px</U></Field>
          </Two>
          <div className="mt-[5px] flex pl-[55px]">
            <Seg c="h-[22px] w-[81px]">
              <span className="bg-[#101010] text-[#3d92e8]"><Svg c="h-[9px] w-[6px]" vb="0 0 6 9"><path d="M0 0v9l6-4.500z" fill="currentColor" stroke="none" /></Svg><FaParagraph className="ml-[2px] size-[12px]" /></span>
              <span><FaParagraph className="mr-[2px] size-[12px]" /><Svg c="h-[9px] w-[6px]" vb="0 0 6 9"><path d="M6 0v9L0 4.500z" fill="currentColor" stroke="none" /></Svg></span>
            </Seg>
            <Seg c="ml-[14px] h-[22px] w-[77px]">
              <span className="bg-[#101010] text-[#3d92e8]"><Svg c="mb-[4px] h-[8px] w-[14px]" vb="0 0 14 8"><path d="M.5.5h13v7H.5zM3 4h8" strokeWidth="1.200" /></Svg></span>
              <span><Svg c="h-[12px] w-[14px]" vb="0 0 14 12"><path d="M.5.5h13v11H.5zM3 3.500h8M3 6h8" strokeWidth="1.200" /></Svg></span>
            </Seg>
          </div>
          <div className="mt-[9px]"><More /></div>
        </div>
        <Rule c="mt-[6px] ml-[10px] w-[276px]" />
        <div className="-ml-px flex h-[28px] items-center pl-[12px] font-bold text-[#8f8f8f]"><T c="w-[101px]">テキストアニメーション</T></div>
        <div className="mt-[6px] ml-[17px] flex h-[28px] w-[131px] items-center rounded-[2px] border border-[#2f2f2f] text-[#8f8f8f]">
          <Svg c="ml-[12px] size-[10px] text-[#c4c4c4]" vb="0 0 10 10"><path d="M5 0v10M0 5h10" strokeWidth="1.800" /></Svg><T c="ml-[9px] w-[89px]">アニメーターを追加</T>
        </div>
      </div>

      <div className="mt-[4px] flex h-[23px] items-center pl-[13px]"><T c="w-[23px]">整列</T><Menu c="mr-[13px] ml-auto" /></div>
      <div className="mt-[3px] flex h-[20px] items-center pl-[8px] text-[#8f8f8f]"><T c="w-[77px]">レイヤーを整列：</T><BoxSel c="ml-[8px] h-[19px] w-[111px]" w="w-[64px]">コンポジション</BoxSel></div>
      <div className="mt-[5px] flex h-[19px] items-center gap-[16px] pl-[11px]">
        {["M1 0v18h1V0zM3 2h8v6H3zM3 10h13v6H3z", "M8.500 0v18h1V0zM5 2h8v6H5zM2.500 10h13v6h-13z", "M16 0v18h1V0zM7 2h8v6H7zM2 10h13v6H2z", "M0 1h18v1H0zM3 3h5v13H3zM10 3h6v8h-6z", "M0 8.500h18v1H0zM3 2h5v13H3zM10 4h6v9h-6z", "M0 16h18v1H0zM3 2h5v13H3zM10 7h6v8h-6z"].map((d) => (
          <Svg key={d} c="size-[18px] text-[#b0b0b0]" vb="0 0 18 18"><path d={d} fill="currentColor" stroke="none" /></Svg>
        ))}
      </div>
      <div className="mt-[3px] ml-[6px] h-[2px] w-[195px] bg-[#303030]" />
      <div className="flex h-[19px] items-center pl-[8px] text-[#8f8f8f]"><T c="w-[77px]">レイヤーを配置：</T></div>
      <div className="flex h-[19px] items-end gap-[16px] pl-[11px]">
        {["M0 0h18v1H0zM5 2h8v4H5zM0 9h18v1H0zM3 11h12v5H3z", "M0 3h18v1H0zM5 1h8v5H5zM0 12h18v1H0zM3 10h12v5H3z", "M5 0h8v4H5zM0 5h18v1H0zM3 9h12v5H3zM0 15.500h18v1H0z", "M0 0h1v17H0zM2 3h5v11H2zM10 0h1v17h-1zM12 4h4v8h-4z", "M4 0h1v17H4zM2 3h5v11H2zM13 0h1v17h-1zM11 4h5v8h-5z", "M1 3h5v11H1zM7 0h1v17H7zM11 4h4v8h-4zM16 0h1v17h-1z"].map((d) => (
          <Svg key={d} c="size-[18px] text-[#3e3e3e]" vb="0 0 18 18"><path d={d} fill="currentColor" stroke="none" /></Svg>
        ))}
      </div>
      <div className="mt-[11px] flex h-[31px] items-center border-y-2 border-[#161616] pl-[13px] text-[#8f8f8f]"><T c="w-[44px]">オーディオ</T></div>
      <div className="flex h-[30px] items-center border-b-2 border-[#161616] pl-[13px] text-[#8f8f8f]"><T c="w-[55px]">CC ライブラリ</T></div>
      <div className="flex h-[30px] items-center border-b-2 border-[#161616] pl-[13px] text-[#8f8f8f]"><T c="w-[135px]">コンテンツに応じた塗りつぶし</T></div>
    </aside>
  );
}

/* ---- timeline ---- */
const Eye = ({ c = "" }: { c?: string }) => <Svg c={`h-[9px] w-[13px] ${c}`} vb="0 0 13 9"><path d="M.5 4.500C3.500 0 9.500 0 12.500 4.500 9.500 9 3.500 9 .5 4.500z" /><circle cx="6.500" cy="4.500" r="2" fill="currentColor" stroke="none" /></Svg>;
const Shy = () => <Svg c="size-[12px]"><path d="M2 9a6 7 0 0112 0z" fill="currentColor" stroke="none" /><path d="M0 10.500h16M8 1v14M4 15h8" strokeWidth="2" /></Svg>;
const Sun = () => <Svg c="size-[12px]"><circle cx="8" cy="8" r="3" strokeWidth="2" /><path d="M8 0v3M8 13v3M0 8h3M13 8h3M2.500 2.500l2 2M11.500 11.500l2 2M13.500 2.500l-2 2M4.500 11.500l-2 2" strokeWidth="1.600" /></Svg>;
const Film = () => <Svg c="size-[12px]"><rect x="1" y="1" width="14" height="14" strokeWidth="2" /><path d="M3.500 1v14M12.500 1v14" strokeDasharray="2 1.500" strokeWidth="2" /><rect x="5.500" y="4" width="5" height="8" fill="currentColor" stroke="none" /></Svg>;
const Blur = () => <Svg c="size-[13px]"><circle cx="10" cy="6" r="5" fill="#8a8a8a" /><path d="M4 5a5 5 0 007 7M2 7.500a5 5 0 006.500 6.500" /></Svg>;
const Cell = ({ w = "w-[13px]", c = "", children }: { w?: string; c?: string; children?: React.ReactNode }) => <span className={`flex h-[13px] shrink-0 items-center justify-center bg-[#3b3b3b] ${w} ${c}`}>{children}</span>;

const marks = Array.from({ length: 31 }, (_, i) => (i === 0 ? ":00f" : i % 6 === 0 ? `0${i / 6}:00f` : `${(i % 6) * 10}f`));

function Timeline() {
  return (
    <section className="flex h-[602px] w-[2233px] flex-col overflow-hidden bg-[#232323] text-[#b4b4b4]">
      <div className="flex h-[26px] items-start">
        <div className="ml-[2px] flex h-[26px] w-[92px] items-center border-b-2 border-[#c4c4c4]">
          <T c="w-[6px]">×</T><span className="ml-[9px] size-[10px] bg-[#ad9b7a]" /><T c="ml-[12px] w-[36px] text-[#dcdcdc]">コンポ 1</T><Menu c="ml-auto" />
        </div>
        <div className="flex h-[26px] items-center text-[#8f8f8f]"><T c="ml-[39px] w-[63px]">レンダーキュー</T></div>
      </div>
      <div className="flex min-h-0 flex-1">
        <div className="flex w-[562px] shrink-0 flex-col">
          <div className="flex h-[40px]">
            <div className="w-[102px] pt-[5px]">
              <T c="ml-[9px] w-[74px] text-[14px] leading-[15px] font-bold text-[#3d92e8]">0:00:00:00</T>
              <T c="mt-[2px] ml-[3px] w-[88px] text-[12px] text-[#2a5c8f]">00000 (60.00 fps)</T>
            </div>
            <div className="mt-[9px] flex h-[20px] w-[291px] rounded-[2px] border border-[#2f2f2f] bg-[#161616] pt-[3px] pl-[8px]"><Loupe c="size-[12px]" /></div>
            <div className="mt-[11px] flex flex-1 items-start pl-[17px]">
              <Svg c="size-[14px]"><path d="M0 4h16M9 4v8h6" /><path d="M0 1h5v5H0zM10 2h5v4h-5z" fill="currentColor" stroke="none" /></Svg>
              <span className="ml-[21px]"><Shy /></span><span className="ml-[13px]"><Film /></span><span className="ml-[15px]"><Blur /></span>
              <Svg c="ml-[18px] size-[16px]"><path d="M1 15V3h14v12zM4 0v5M8 0v5M12 0v5" /></Svg>
            </div>
          </div>
          <div className="flex h-[16px] items-center">
            <Eye c="-ml-[5px]" />
            <Svg c="ml-[4px] h-[11px] w-[12px]" vb="0 0 12 11"><path d="M0 3.500h3L6 0v11L3 7.500H0z" fill="currentColor" stroke="none" /><path d="M7.500 3c1 1.500 1 3.500 0 5M9.500 1.500c2 2.500 2 5.500 0 8" strokeWidth="1.200" /></Svg>
            <span className="ml-[5px] size-[7px] rounded-full bg-[#b4b4b4]" />
            <Svg c="ml-[6px] h-[12px] w-[10px]" vb="0 0 10 12"><path d="M2.500 5V3a2.500 2.500 0 015 0v2" /><rect y="5" width="10" height="7" fill="currentColor" stroke="none" /><path d="M5 7v3" stroke="#222" /></Svg>
            <HS c="ml-[8px]" /><FaTag className="ml-[12px] size-[12px] shrink-0" /><HS c="ml-[7px]" />
            <T c="ml-[4px] w-[7px] text-[#8f8f8f]">#</T><HS c="ml-[18px]" /><T c="ml-[6px] w-[44px]">ソース名</T><HS c="ml-[117px]" />
            <div className="ml-[5px] flex items-center gap-[3px]"><Shy /><Sun /><Svg c="size-[12px]"><path d="M1 2l14 12" strokeWidth="2.500" strokeDasharray="4 1.500" /></Svg><T c="w-[11px] text-[14px] italic">fx</T><Film /><Blur />
              <Svg c="size-[12px]"><circle cx="8" cy="8" r="6.500" strokeWidth="1.800" /><path d="M12.500 3.500a6.400 6.400 0 01-9 9z" fill="currentColor" /></Svg>
              <Svg c="size-[12px]"><path d="M8 1l6 3.500v7L8 15l-6-3.500v-7zM2 4.500L8 8l6-3.500M8 8v7" strokeWidth="1.700" /></Svg>
            </div>
            <HS c="ml-[15px]" /><T c="ml-[6px] w-[49px]">親とリンク</T><HS c="ml-[60px]" />
          </div>
          <div className="mt-[1px] flex h-[18px] items-center bg-[#474747]">
            <Cell w="w-[9px]"><Eye c="-ml-[4px]" /></Cell><Cell c="ml-[17px]" /><Cell c="ml-[2px]" />
            <Svg c="ml-[11px] h-[8px] w-[5px]" vb="0 0 5 8"><path d="M.7.7L4 4 .7 7.300" /></Svg>
            <span className="ml-[7px] h-[15px] w-[14px] bg-[#b23535]" />
            <T c="ml-[8px] w-[5px]">1</T><span className={`${serif} ml-[26px] text-[12px]`}>T</span>
            <div className="ml-[7px] flex h-[18px] w-[146px] items-center border-2 border-[#a5a5a5] bg-[#474747] pl-[2px] text-[#c4c4c4]"><T c="w-[84px]">サンプルテキスト</T></div>
            <Cell c="ml-[5px]"><Shy /></Cell><Cell c="ml-[2px] text-[#777]"><Sun /></Cell><Cell c="ml-[2px]"><Svg c="size-[11px]"><path d="M1 15L15 1" strokeWidth="2" /></Svg></Cell>
            <Cell c="ml-[32px]" /><Cell c="ml-[2px]" /><Cell c="ml-[2px]" />
            <Svg c="ml-[20px] size-[12px]"><path d="M8 8.500c-1-1 .5-2.500 2-1.500s1 4-1.500 4.500S4 10 4.500 7 8 3 10.500 4s4 5 2 8-7 3.500-9.500 1S.5 5 4 2" /></Svg>
            <div className="ml-[6px] flex h-full w-[90px] items-center bg-[#1b1b1b] pl-[7px] text-[#c4c4c4]"><T c="w-[21px]">なし</T><Chev c="mr-[4px] ml-auto" /></div>
          </div>
          <div className="mt-auto flex h-[18px] items-center border-t border-black text-[12px]">
            <Svg c="size-[12px] text-[#3d92e8]"><path d="M0 1h12v14H0M3 5h6" strokeWidth="2" /></Svg>
            <span className="ml-[6px]"><Shy /></span><span className="ml-[7px]"><Film /></span><span className="ml-[7px]"><Blur /></span>
            <T c="ml-[24px] w-[114px]">フレームレンダリング時間</T><T c="ml-[4px] w-[8px] text-[#3c9]">0</T>
            <div className="ml-[70px] flex h-[16px] w-[134px] items-center justify-center rounded-[2px] border border-[#2f2f2f] text-[#8f8f8f]"><T c="w-[82px]">スイッチ / モード</T></div>
          </div>
        </div>
        <div className="flex flex-1 flex-col">
          <div className="mt-[7px] flex h-[10px]">
            <span className="w-[7px] rounded-l-full bg-[#2f8ae6]" />
            <div className="w-[1639px] border-y border-black bg-[#696969]" />
            <span className="w-[7px] rounded-r-full bg-[#2f8ae6]" />
          </div>
          <div className="ml-[7px] h-[19px] w-[1646px] overflow-hidden border-r border-black">
            <div className="-ml-[27px] flex h-full w-[1694px] text-[13px]">
              {marks.map((m, i) => (
                <div key={i} className="flex h-full flex-1 flex-col items-center justify-between">
                  {m.length > 3 ? <T c={i ? "w-[29px]" : "w-[26px]"}>{m}</T> : <T c="w-[14px]">{m}</T>}
                  <span className={m.length > 3 ? "h-[6px] w-px bg-[#8f8f8f]" : "h-[5px] w-px bg-[#8f8f8f]"} />
                </div>
              ))}
            </div>
          </div>
          <div className="ml-[7px] flex h-[17px] items-center">
            <div className="h-[17px] w-[1639px] border-y border-black bg-[#606060] shadow-[inset_0_1px_0_#757575]" />
            <span className="h-[15px] w-[6px] rounded-r-[4px] bg-[#2f8ae6]" />
            <Svg c="ml-[5px] h-[14px] w-[11px]" vb="0 0 11 14"><path d="M0 0h11v10l-5 4-6-4z" fill="#b0b0b0" stroke="none" /></Svg>
          </div>
          <div className="ml-[7px] h-[3px] w-[1639px] bg-[#22b535]" />
          <div className="ml-[7px] flex h-[20px] items-center">
            <div className="h-full w-[1639px] border-t-2 border-b border-t-[#1d1d1d] border-b-[#232323]">
              <div className="h-[17px] border-t border-b-2 border-t-[#cf9a97] border-b-[#6b4a4a] bg-linear-to-b from-[#ab4747] to-[#993f3f]" />
            </div>
            <span className="h-[17px] w-[7px] bg-[#474747]" />
            <Svg c="ml-[1px] h-[13px] w-[16px]" vb="0 0 16 13"><path d="M7 1L1 7l4-1" /><circle cx="7" cy="9" r="3" /><path d="M9 3h7v7h-5z" fill="#b0b0b0" stroke="none" /></Svg>
          </div>
          <div className="ml-[7px] w-[1639px] flex-1 border-l border-[#3a6ea5] bg-[#303030]" />
          <div className="flex h-[19px] w-[108px] items-center border-t border-black">
            <Svg c="ml-[7px] h-[5px] w-[8px]" vb="0 0 8 5"><path d="M0 5l4-5 4 5z" fill="#b4b4b4" stroke="none" /></Svg>
            <span className="ml-[11px] size-[10px] rounded-full border-2 border-[#a0a0a0]" /><span className="h-[2px] w-[38px] bg-[#3b3b3b]" />
            <Svg c="ml-[12px] h-[8px] w-[17px]" vb="0 0 17 8"><path d="M0 8l4-6 2 2-3 4zM5 8l6-8 6 8z" fill="#b4b4b4" stroke="none" /></Svg>
          </div>
        </div>
      </div>
    </section>
  );
}

/* ---- taskbar ---- */
const App24 = ({ children, dot = true, on = false }: { children: React.ReactNode; dot?: boolean; on?: boolean }) => (
  <div className="relative flex h-[40px] w-[44px] shrink-0 flex-col items-center justify-end">
    {on && <span className="absolute inset-x-[2px] top-0 bottom-0 rounded-[5px] border border-[#57403f] bg-[#4a3334]" />}
    <span className="relative flex h-[32px] w-[28px] items-center justify-center">{children}</span>
    <span className={on ? "relative mb-[2px] h-[3px] w-[16px] rounded-full bg-[#a9bccb]" : dot ? "mb-[2px] h-[3px] w-[6px] rounded-full bg-[#a39a9a]" : "mb-[2px] h-[3px] w-[6px]"} />
  </div>
);
const G = ({ children }: { children: React.ReactNode }) => <svg viewBox="0 0 24 24" className="size-[25px] shrink-0">{children}</svg>;

function Taskbar() {
  return (
    <footer className="flex h-[49px] items-center border-t border-[#554846] bg-linear-to-r from-[#2a2628] via-[#3a1e1f] via-25% to-[#342423] to-75% text-[13px] text-white">
      <svg className="h-0 w-0" aria-hidden="true">
        <defs>
          <linearGradient id="fx" x1="1" y1="0" x2="0" y2="1"><stop offset="0" stopColor="#ffe03a" /><stop offset=".5" stopColor="#ff7a1a" /><stop offset="1" stopColor="#f0206f" /></linearGradient>
          <linearGradient id="eg" x1="1" y1="0" x2="0" y2="1"><stop offset="0" stopColor="#5fdc7a" /><stop offset=".5" stopColor="#27b4dc" /><stop offset="1" stopColor="#0d56b0" /></linearGradient>
          <linearGradient id="wn" x1="0" y1="0" x2="1" y2="1"><stop offset="0" stopColor="#8fe8ff" /><stop offset="1" stopColor="#0c93f0" /></linearGradient>
        </defs>
      </svg>
      <div className="flex w-[641px] items-center pl-[9px]">
        <svg viewBox="0 0 24 24" className="size-[25px]"><path d="M5 15a5 5 0 010-9 7 7 0 0113 0 5 5 0 012 9z" fill="#b5cdf5" /><path d="M9 12c3 3 3 10 0 10s-3-6 0-10zM17 12c3 3 3 10 0 10s-3-6 0-10z" fill="#1a73e8" /></svg>
        <div className="ml-[7px] flex flex-col gap-[3px]"><T c="w-[19px]">9°C</T><T c="w-[12px] text-[#d5cdcd]">雨</T></div>
      </div>
      <svg viewBox="0 0 24 24" className="size-[24px]"><path d="M0 0h11.500v11.500H0zM12.500 0H24v11.500H12.500zM0 12.500h11.500V24H0zM12.500 12.500H24V24H12.500z" fill="url(#wn)" /></svg>
      <div className="ml-[12px] flex h-[32px] w-[220px] items-center rounded-full border border-[#65504f] bg-[#513c3b] text-[#d5cdcd]">
        <Loupe c="ml-[11px] size-[16px]" /><T c="ml-[9px] w-[27px] text-[14px]">検索</T>
        <svg viewBox="0 0 46 26" className="mr-[4px] ml-auto h-[26px] w-[46px]"><path d="M0 24c12-5 34-5 46 0-12 3-34 3-46 0z" fill="#5f9e35" /><path d="M2 12h6v11H2z" fill="#8fb3c9" /><path d="M10 23l2-22 2 22z" fill="#d05a86" /><circle cx="12" cy="8" r="2.500" fill="#d05a86" /><circle cx="12" cy="16" r="3" fill="#b5487a" /><path d="M17 7h6v16h-6zM25 11h4v12h-4z" fill="#6aa9d6" /><path d="M30 1h4v22h-4z" fill="#86c5dd" /><path d="M36 14h4v9h-4z" fill="#4f7fa8" /><ellipse cx="42" cy="17" rx="3.500" ry="6" fill="#e0a860" /></svg>
      </div>
      <div className="ml-[2px] flex">
        <App24 dot={false}><G><path d="M7 1h17v17H7z" fill="#f4f4f4" /><path d="M0 7h17v17H0z" fill="#8b8484" opacity=".85" /></G></App24>
        <App24 dot={false}><G><path d="M12 1a11 11 0 11-4 21l-7 1 1-6A11 11 0 0112 1z" fill="#6a6bc8" /><rect x="5" y="8" width="9" height="8" rx="1" fill="#fff" /><path d="M15 11l4-3v8l-4-3z" fill="#fff" /></G></App24>
        <App24><G><path d="M0 2h8l2 3h14v18H0z" fill="#e0a419" /><path d="M0 7h24v16H0z" fill="#fcd462" /><path d="M4 16h16v7H4z" fill="#1a78d0" /></G></App24>
        <App24><G><circle cx="12" cy="13" r="7" fill="#7a3fe0" /></G><FaFirefoxBrowser className="absolute size-[24px] fill-[url(#fx)]" /></App24>
        <App24 dot={false}><G><path d="M4 3l4-3h8l4 3 2 4-3 12-7 5-7-5L2 7z" fill="#f0441f" /><path d="M6 6l3-1 3 1 3-1 3 1 1 4-4 4 1 3-4 3-4-3 1-3-4-4z" fill="#fff" /><path d="M7 9l3 1.500M17 9l-3 1.500M12 9v5M10 15h4" stroke="#f0441f" strokeWidth="1.300" /></G></App24>
        <App24><FaEdge className="size-[24px] fill-[url(#eg)]" /></App24>
        <App24><G><rect width="24" height="24" rx="6" fill="#e23a3f" /><circle cx="12" cy="12" r="9.500" fill="#fff" /><path d="M7.500 8.500l4.500 8 4.500-8" fill="none" stroke="#e23a3f" strokeWidth="3" strokeLinecap="round" strokeLinejoin="round" /></G></App24>
        <App24><G><circle cx="13" cy="14" r="7" fill="#e8f2fd" /></G><SiThunderbird className="absolute size-[24px] text-[#2484e6]" /></App24>
        <App24><BiLogoVisualStudio className="size-[27px] text-[#2596e0]" /></App24>
        <App24 dot={false}><G><path d="M0 13l4-4 6 6-4 5z" fill="#1b4fa0" /><path d="M6 20L20 4l4 4-14 15z" fill="#3f9bec" /></G></App24>
        <App24><G><rect y="2" width="24" height="20" rx="1" fill="#3e3e3e" /><rect y="2" width="24" height="4" fill="#a5a5a5" /><path d="M3 9l5 4-5 5M11 19h8" stroke="#fff" strokeWidth="2" fill="none" /></G></App24>
        <App24><G><rect width="24" height="24" rx="4" fill="#175ddc" /><path d="M5 4h14v8c0 5-4 7-7 9-3-2-7-4-7-9z" fill="#fff" /><path d="M12 6h5v6c0 3-2 5-5 6.500z" fill="#175ddc" /></G></App24>
        <App24><span className="flex size-[25px] items-center justify-center rounded-full bg-[#5865f2]"><FaDiscord className="size-[17px]" /></span><span className="absolute -top-px -right-px flex size-[14px] items-center justify-center rounded-full bg-[#e0524c]"><i className="size-[5px] rounded-full bg-white" /></span></App24>
        <App24><div className="flex w-[25px] flex-col items-center text-[8px] leading-[12px] font-bold"><span className="flex w-full justify-center bg-[#ee4a3c]"><T c="w-[21px]">VOICE</T></span><span className="flex w-full justify-center bg-[#2c4356]"><T c="w-[23px]">MEETER</T></span></div></App24>
        <App24><G><path d="M2 8l8-8 10 9v9H8z" fill="#f58a3a" /><path d="M1 8l6 4v9l-6-4z" fill="#151515" /><path d="M11 4l9 7v6h-9l-4-5z" fill="#e85a8a" /><rect x="7" y="14" width="17" height="10" rx="2" fill="#8a3be0" /></G><span className="absolute right-[2px] bottom-[5px] text-[7px] leading-none font-bold">Beta</span></App24>
        <App24><G><circle cx="12" cy="12" r="12" fill="#34a853" /><path d="M12 12L1.600 6A12 12 0 0122.400 6z" fill="#ea4335" /><path d="M22.400 6A12 12 0 0112 24l5-9-5-9z" fill="#fbbc05" /><circle cx="12" cy="12" r="5.500" fill="#fff" /><circle cx="12" cy="12" r="4.300" fill="#4285f4" /></G><span className="absolute -top-[1px] -right-[3px] flex size-[15px] items-center justify-center rounded-full bg-[#b8245a] text-[10px] leading-none">y</span></App24>
        <App24><span className="rounded-full bg-[#222]"><SiObsstudio className="size-[24px] text-[#d0d0d0]" /></span><span className="absolute -top-px -right-[3px] size-[13px] rounded-full bg-[#f80000]" /></App24>
        <App24 on><span className="flex size-[24px] items-center justify-center rounded-[4px] bg-[#00005b] text-[13px] font-semibold text-[#a9a9ff]">Ae</span></App24>
        <App24><G><path d="M12 0l7 20H5z" fill="#f58220" /><path d="M9.500 7h5l1.300 4H8.200zM7 15h10l1 3H6z" fill="#f4f4f4" /><path d="M3 19h18l2 5H1z" fill="#f08a1d" /></G></App24>
        <App24><G><circle cx="12" cy="12" r="12" fill="#3a76f0" /><circle cx="12" cy="12" r="8.500" fill="none" stroke="#fff" strokeDasharray="2 1" /><circle cx="12" cy="12" r="6.500" fill="#fff" /><path d="M5 19l1-5 4 4z" fill="#fff" /></G></App24>
        <App24><G><rect x=".7" y=".7" width="22.600" height="22.600" fill="#2b2b2b" stroke="#d8c9b0" strokeWidth="1.400" /><path d="M4 4h4v10H4z" fill="#e05a3a" /><path d="M8 4h4v10H8z" fill="#f5c02a" /><path d="M12 4h4v10h-4z" fill="#49b045" /><path d="M16 4h4v10h-4z" fill="#3a86e0" /><path d="M4 17h4v3H4zM10 17h4v3h-4zM16 17h4v3h-4z" fill="#ddd" /></G></App24>
        <App24><G><path d="M7 1h16v18h-2V3H7z" fill="#a124b8" /><path d="M4 5h15v16h-2V7H4z" fill="#8a1fa8" /><path d="M1 9h14v14H1z" fill="#c321b4" /><path d="M4 12h8v8H4z" fill="#e02a9a" /></G></App24>
        <App24><G><circle cx="12" cy="12" r="11" fill="#0d1440" stroke="#b0a8b8" strokeWidth="1.200" /><path d="M5 8h14M5 12h14M5 16h14" stroke="#d8dcf5" strokeWidth="2" strokeDasharray="2 1" /></G></App24>
      </div>
      <div className="mr-[13px] ml-auto flex flex-col items-end gap-[3px]"><T c="w-[21px]">3:15</T><T c="w-[84px]">2023/11/30 (木)</T></div>
    </footer>
  );
}

const Half = ({ children }: { children: string }) => <span className="[font-feature-settings:'halt']">{children}</span>;

export default function App() {
  return (
    <div className="relative flex h-[1440px] w-[2540px] flex-col overflow-hidden bg-[#161616] font-['Open_Sans','Noto_Sans_CJK_JP',sans-serif] text-[13px] leading-none">
      <MenuBar />
      <Toolbar />
      <div className="mt-[2px] flex h-[1321px]">
        <div className="flex w-[2233px] shrink-0 flex-col">
          <div className="flex h-[715px]"><ProjectPanel /><CompPanel /></div>
          <div className="mt-[4px]"><Timeline /></div>
        </div>
        <RightColumn />
      </div>
      <Taskbar />

      <div className="absolute top-[727px] left-[1119px] size-[80px] rounded-full bg-[#626339]" />
      <svg viewBox="0 0 12 18" className="absolute top-[769px] left-[1132px] h-[19px] w-[13px]"><path d="M1 1v14l3.500-3 2 5 2-1-2-4.500H11z" fill="#fff" stroke="#111" strokeWidth=".8" /></svg>
      <div className="absolute top-[833px] -left-[10px] h-[553px] w-[579px] border-[7px] border-[#ed4747]" />
      <div className="absolute top-[171px] left-[2229px] h-[825px] w-[314px] border-[7px] border-[#ed4747]" />
      <p className="absolute top-[232px] left-[1691px] font-['Noto_Sans_CJK_JP',sans-serif] text-[72.75px] leading-[72px] font-black whitespace-nowrap text-[#ed4747]">スタイルの調整</p>
      <p className="absolute top-[948px] left-[601px] font-['Noto_Sans_CJK_JP',sans-serif] text-[72.75px] leading-[72px] font-black whitespace-nowrap text-[#ed4747]">右クリック→<Half>「</Half>新規<Half>」</Half>→<Half>「</Half>テキスト<Half>」</Half></p>
    </div>
  );
}
